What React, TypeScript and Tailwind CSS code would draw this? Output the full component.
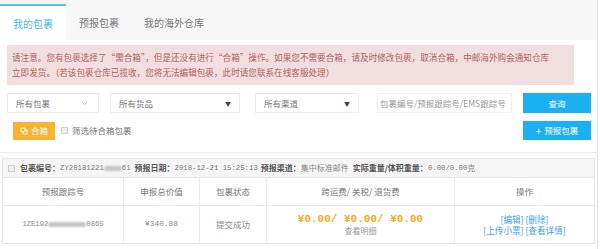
import React from 'react';

const cjk = "font-['Noto_Sans_CJK_SC','Noto_Sans',sans-serif]";
const mono = "font-['Liberation_Mono','Noto_Sans_CJK_SC',monospace]";

function Blur({ w }: { w: string }) {
  return <span className={`inline-block h-[5px] ${w} bg-[#c4c4c4] blur-[1px] rounded-sm align-middle`} />;
}

function Box() {
  return <span className="inline-block w-[7px] h-[7px] border border-[#cfcfcf] bg-[#eee]" />;
}

export default function App() {
  const cols = 'grid grid-cols-[121px_76px_67px_188px_1fr]';
  return (
    <div className={`w-[600px] h-[249px] overflow-hidden bg-white ${cjk} text-[#777]`}>
      <div className="w-[598px] h-full border-r border-[#e2e2e2]">
        {/* tabs */}
        <div className="h-[40px] bg-[#f7f7f7] flex items-end text-[10px]">
          <div className="h-[36px] px-[13px] bg-white border-t-2 border-[#56c1ec] flex items-center text-[#4db4e4]">
            我的包裹
          </div>
          <div className="h-[36px] px-[13px] flex items-center text-[#777]">预报包裹</div>
          <div className="h-[36px] px-[12px] flex items-center text-[#777]">我的海外仓库</div>
        </div>

        {/* notice */}
        <div className="mt-[5px] ml-[7px] w-[567px] h-[40px] bg-[#f2dede] px-[5px] py-[5px] text-[8.6px] leading-[15px] text-[#b0625e] whitespace-nowrap">
          请注意。您有包裹选择了“需合箱”，但是还没有进行“合箱”操作。如果您不需要合箱，请及时修改包裹，取消合箱，中邮海外购会通知仓库
          <br />
          立即发货。（若该包裹仓库已揽收，您将无法编辑包裹，此时请您联系在线客服处理）
        </div>

        {/* filters */}
        <div className="pt-[8px] pb-[12px] border-b border-[#ececec] text-[8.5px]">
          <div className="flex items-center h-[20px]">
            <div className="ml-[7px] w-[92px] h-[20px] border border-[#ececec] flex items-center justify-between px-[8px]">
              <span>所有包裹</span>
              <svg width="7" height="5" viewBox="0 0 7 5" className="mr-[2px]">
                <path d="M1 1l2.5 2.5L6 1" fill="none" stroke="#bbb" strokeWidth="0.9" />
              </svg>
            </div>
            <div className="ml-[11px] w-[130px] h-[20px] border border-[#ececec] flex items-center justify-between px-[8px]">
              <span>所有货品</span>
              <span className="text-[6px] text-[#444]">▼</span>
            </div>
            <div className="ml-[15px] w-[104px] h-[20px] border border-[#ececec] flex items-center justify-between px-[8px]">
              <span>所有渠道</span>
              <span className="text-[6px] text-[#444]">▼</span>
            </div>
            <div className="ml-[18px] w-[135px] h-[20px] border border-[#f0f0f0] flex items-center px-[2px] text-[#999] whitespace-nowrap overflow-hidden">
              包裹编号/预报跟踪号/EMS跟踪号
            </div>
            <button className="ml-[11px] w-[68px] h-[20px] bg-[#1bb0f2] text-white flex items-center justify-center">
              查询
            </button>
          </div>
          <div className="flex items-center mt-[8px] h-[19px]">
            <button className="ml-[13px] w-[42px] h-[18px] bg-[#f7b433] text-white flex items-center justify-center gap-[3px]">
              <svg width="8" height="8" viewBox="0 0 8 8">
                <path d="M1 1h4v3.5H1z M3 4.5V7h4V3H5" fill="none" stroke="#fff" strokeWidth="0.9" />
              </svg>
              合箱
            </button>
            <span className="ml-[6px] flex items-center">
              <Box />
            </span>
            <span className="ml-[4px] text-[#777]">筛选待合箱包裹</span>
            <button className="ml-auto mr-[6px] w-[68px] h-[19px] bg-[#1bb0f2] text-white flex items-center justify-center gap-[3px]">
              <span className="text-[10px] leading-none">+</span>预报包裹
            </button>
          </div>
        </div>

        {/* order */}
        <div className="mt-[5px] mx-[2px] border border-[#e6e6e6]">
          <div className="h-[19px] bg-[#f5f5f5] border-b border-[#e6e6e6] flex items-center px-[5px] text-[8px] whitespace-nowrap">
            <Box />
            <span className="ml-[5px] font-bold text-[#555]">包裹编号：</span>
            <span className={`${mono} text-[7.3px] text-[#777]`}>ZY20181221</span>
            <Blur w="w-[18px]" />
            <span className={`${mono} text-[7.3px] text-[#777]`}>61</span>
            <span className="ml-[4px] font-bold text-[#555]">预报日期：</span>
            <span className={`${mono} text-[7.3px] text-[#777]`}>2018-12-21 15:25:13</span>
            <span className="ml-[3px] font-bold text-[#555]">预报渠道：</span>
            <span className="text-[#888]">集中标准邮件</span>
            <span className="ml-[4px] font-bold text-[#555]">实际重量/体积重量：</span>
            <span className={`${mono} text-[7.3px] text-[#777]`}>0.00/0.00</span>
            <span className="text-[#888]">克</span>
          </div>
          <div className={`${cols} h-[28px] border-b border-[#ececec] text-[8.5px] text-[#777]`}>
            <div className="flex items-center justify-center border-r border-[#ececec]">预报跟踪号</div>
            <div className="flex items-center justify-center border-r border-[#ececec]">申报总价值</div>
            <div className="flex items-center justify-center border-r border-[#ececec]">包裹状态</div>
            <div className="flex items-center justify-center border-r border-[#ececec]">跨运费/ 关税/ 退货费</div>
            <div className="flex items-center justify-center">操作</div>
          </div>
          <div className={`${cols} h-[37px] text-[8.5px]`}>
            <div className="flex items-center justify-center border-r border-[#ececec]">
              <span className={`${mono} text-[7.2px] text-[#888]`}>1ZE192</span>
              <Blur w="w-[38px]" />
              <span className={`${mono} text-[7.2px] text-[#888]`}>0865</span>
            </div>
            <div className={`flex items-center justify-center border-r border-[#ececec] ${mono} text-[7.8px] text-[#888]`}>
              ¥340.88
            </div>
            <div className="flex items-center justify-center border-r border-[#ececec] text-[#888]">提交成功</div>
            <div className="flex flex-col items-center justify-center border-r border-[#ececec]">
              <span className={`${mono} text-[11px] leading-[12px] font-bold text-[#f4aa22] whitespace-nowrap`}>
                ¥0.00/ ¥0.00/ ¥0.00
              </span>
              <span className="text-[8px] leading-[11px] text-[#999]">查看明细</span>
            </div>
            <div className="flex flex-col items-center justify-center text-[8.6px] leading-[11px] text-[#3da0e6] whitespace-nowrap">
              <span>[编辑] [删除]</span>
              <span>[上传小票] [查看详情]</span>
            </div>
          </div>
        </div>
      </div>
    </div>
  );
}
